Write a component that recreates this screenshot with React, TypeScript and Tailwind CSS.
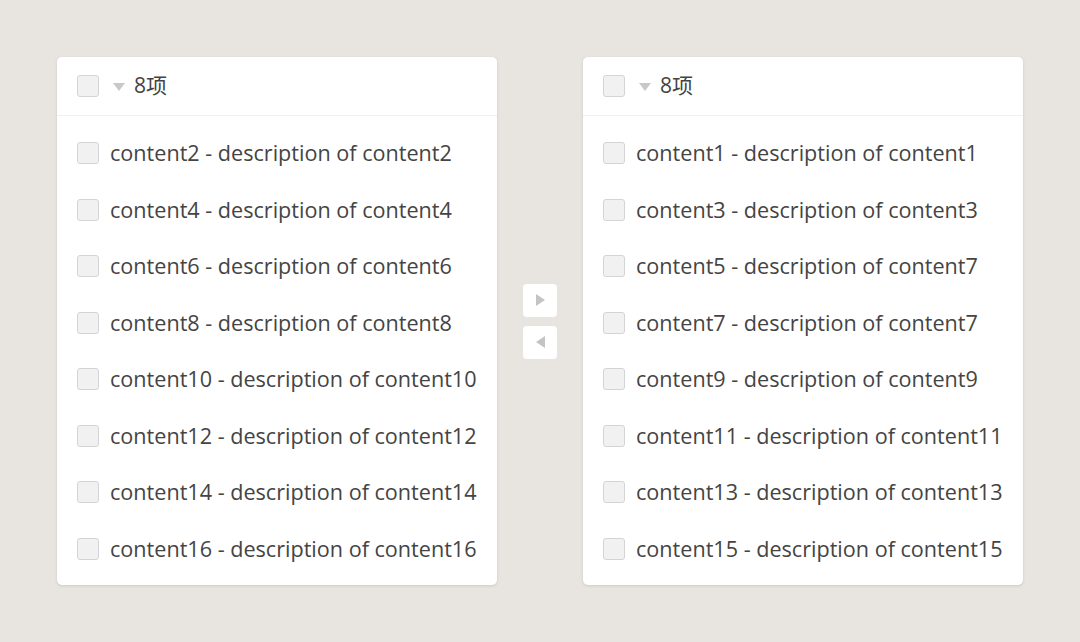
import React from "react";

const left = [2, 4, 6, 8, 10, 12, 14, 16].map((n) => `content${n} - description of content${n}`);
const right = [
  "content1 - description of content1",
  "content3 - description of content3",
  "content5 - description of content7",
  "content7 - description of content7",
  "content9 - description of content9",
  "content11 - description of content11",
  "content13 - description of content13",
  "content15 - description of content15",
];

function Box() {
  return <div className="w-[22px] h-[22px] shrink-0 rounded-[3px] border border-[#d4d4d4] bg-[#f1f1f1]" />;
}

function Panel({ items }: { items: string[] }) {
  return (
    <div className="w-[440px] h-[528px] bg-white rounded-[5px] shadow-[0_1px_3px_rgba(0,0,0,0.12)] flex flex-col">
      <div className="h-[59px] flex items-center pl-[20px] border-b border-[#f0f0f0]">
        <Box />
        <svg width="12" height="8" viewBox="0 0 12 8" className="ml-[14px] mt-[2px]">
          <path d="M0 0 L12 0 L6 8 Z" fill="#c8c8c8" />
        </svg>
        <span className="ml-[9px] text-[21px] text-[#444444]">8项</span>
      </div>
      <div className="flex flex-col pt-[9px]">
        {items.map((t) => (
          <div key={t} className="h-[56.5px] flex items-center pl-[20px]">
            <Box />
            <span className="ml-[11px] text-[21.6px] text-[#444444] whitespace-nowrap">{t}</span>
          </div>
        ))}
      </div>
    </div>
  );
}

export default function App() {
  return (
    <div
      className="w-[1080px] h-[642px] bg-[#e8e5e0] flex items-start pt-[57px] pl-[57px]"
      style={{ fontFamily: '"Open Sans", "Noto Sans CJK SC", sans-serif' }}
    >
      <Panel items={left} />
      <div className="w-[86px] h-[528px] flex flex-col items-center justify-center gap-[9px]">
        <button className="w-[34px] h-[33px] bg-white rounded-[4px] flex items-center justify-center">
          <svg width="9" height="12" viewBox="0 0 9 12"><path d="M0 0 L9 6 L0 12 Z" fill="#c4c4c4" /></svg>
        </button>
        <button className="w-[34px] h-[33px] bg-white rounded-[4px] flex items-center justify-center">
          <svg width="9" height="12" viewBox="0 0 9 12"><path d="M9 0 L0 6 L9 12 Z" fill="#c4c4c4" /></svg>
        </button>
      </div>
      <Panel items={right} />
    </div>
  );
}
